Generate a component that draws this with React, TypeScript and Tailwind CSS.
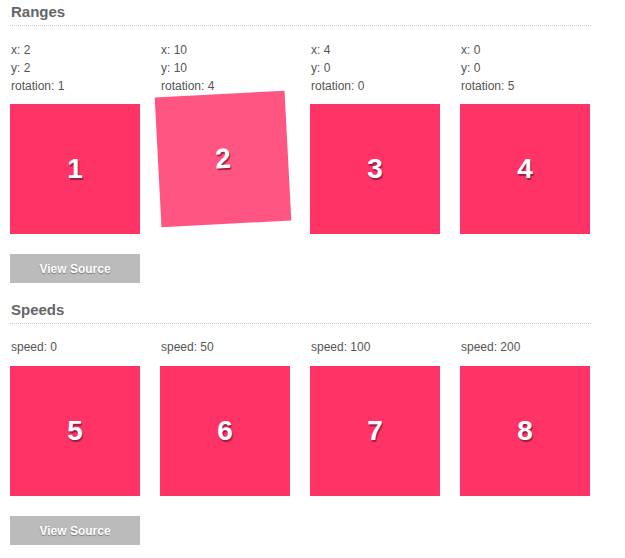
const ranges = [
  { n: 1, lines: ["x: 2", "y: 2", "rotation: 1"] },
  { n: 2, lines: ["x: 10", "y: 10", "rotation: 4"], moved: true },
  { n: 3, lines: ["x: 4", "y: 0", "rotation: 0"] },
  { n: 4, lines: ["x: 0", "y: 0", "rotation: 5"] },
];

const speeds = [
  { n: 5, label: "speed: 0" },
  { n: 6, label: "speed: 50" },
  { n: 7, label: "speed: 100" },
  { n: 8, label: "speed: 200" },
];

const Box = ({ n, moved = false }: { n: number; moved?: boolean }) => (
  <div
    className={`w-[130px] h-[130px] flex items-center justify-center text-white font-bold text-[28px] [text-shadow:1px_2px_1px_#9c1c44] ${
      moved ? "bg-[#ff5582] translate-x-[-2px] translate-y-[-10px] rotate-[-3deg]" : "bg-[#ff3366]"
    }`}
  >
    {n}
  </div>
);

const Heading = ({ children }: { children: string }) => (
  <h2 className="w-[581px] ml-[10px] pl-px pb-[3px] text-[15px] leading-[20px] font-bold text-[#666] border-b border-dotted border-[#ccc]">
    {children}
  </h2>
);

const ViewSource = () => (
  <button className="ml-[10px] w-[130px] h-[29px] bg-[#bbb] text-white text-[12px] font-bold [text-shadow:0_1px_1px_#777]">
    View Source
  </button>
);

export default function App() {
  return (
    <div className="w-[625px] h-[558px] bg-white font-['Liberation_Sans',Arial,sans-serif] pt-[2px]">
      {/* Ranges */}
      <Heading>Ranges</Heading>
      <div className="flex mt-[15px] ml-[10px]">
        {ranges.map((r) => (
          <div key={r.n} className="w-[150px]">
            <div className="pl-px text-[12px] leading-[18px] text-[#555]">
              {r.lines.map((l) => (
                <div key={l}>{l}</div>
              ))}
            </div>
            <div className="mt-[9px]">
              <Box n={r.n} moved={r.moved} />
            </div>
          </div>
        ))}
      </div>
      <div className="mt-[20px]">
        <ViewSource />
      </div>

      {/* Speeds */}
      <div className="mt-[17px]">
        <Heading>Speeds</Heading>
      </div>
      <div className="flex mt-[14px] ml-[10px]">
        {speeds.map((s) => (
          <div key={s.n} className="w-[150px]">
            <div className="pl-px text-[12px] leading-[18px] text-[#555]">{s.label}</div>
            <div className="mt-[10px]">
              <Box n={s.n} />
            </div>
          </div>
        ))}
      </div>
      <div className="mt-[20px]">
        <ViewSource />
      </div>
    </div>
  );
}
